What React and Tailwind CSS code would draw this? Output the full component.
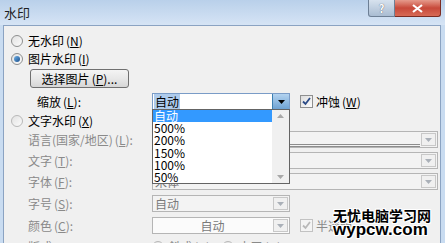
import { useState } from 'react'

const font = { fontFamily: '"Noto Sans CJK SC", "Liberation Sans", sans-serif' }

const Key = ({ k }) => (
  <span className="ml-[2px]">
    (<span className="underline">{k}</span>)
  </span>
)

const Radio = ({ checked, disabled }) => (
  <span
    className={`flex h-[12px] w-[12px] shrink-0 items-center justify-center rounded-full border ${
      disabled ? 'border-[#b8b8b8]' : 'border-[#8e8f8f]'
    } bg-gradient-to-br from-[#e2e2e2] to-[#fbfbfb]`}
  >
    {checked ? (
      <span className="h-[6px] w-[6px] rounded-full bg-gradient-to-br from-[#6fb2e8] to-[#1b4f8c]" />
    ) : null}
  </span>
)

const Check = ({ disabled }) => (
  <span
    className={`flex h-[13px] w-[13px] shrink-0 items-center justify-center border ${
      disabled ? 'border-[#c2c2c2] bg-[#f4f4f4]' : 'border-[#8e8f8f] bg-gradient-to-br from-[#dcdcdc] to-[#fdfdfd]'
    }`}
  >
    <svg width="9" height="9" viewBox="0 0 9 9">
      <path
        d="M1 4.5 L3.5 7 L8 1"
        fill="none"
        stroke={disabled ? '#b9b9b9' : '#2b4b87'}
        strokeWidth="1.8"
      />
    </svg>
  </span>
)

const Arrow = ({ color = '#9a9a9a' }) => (
  <svg width="7" height="4" viewBox="0 0 7 4">
    <path d="M0 0 H7 L3.5 4 Z" fill={color} />
  </svg>
)

const Combo = ({ width, text, center, bg = 'bg-[#f3f3f3]', doubled }) => (
  <div
    className={`flex h-[17px] items-stretch border border-[#b5b5b5] ${bg}`}
    style={{ width }}
  >
    <div
      className={`flex flex-1 items-center px-[2px] text-[#7a7a7a] ${center ? 'justify-center' : ''} ${
        doubled ? 'border-b-[3px] border-double border-[#8d8d8d]' : ''
      }`}
    >
      {text}
    </div>
    <div className="m-px flex w-[15px] items-center justify-center border border-[#c8c8c8] bg-[#f0f0f0]">
      <Arrow color="#aab0b8" />
    </div>
  </div>
)

function App() {
  const [items] = useState(['自动', '500%', '200%', '150%', '100%', '50%'])

  return (
    <div
      className="relative h-[243px] w-[445px] overflow-hidden bg-[#c9dcf1] text-[12px] leading-none text-black"
      style={font}
    >
      {/* title bar */}
      <div className="flex h-[25px] items-start justify-between bg-gradient-to-b from-[#b9d0ea] to-[#d6e4f5]">
        <div className="pl-[4px] pt-[6px] text-[13px] text-[#1e1e1e]">水印</div>
        <div className="flex pr-[4px]">
          <div className="flex h-[17px] w-[27px] items-center justify-center rounded-bl-[3px] border border-t-0 border-[#6d7f95] bg-gradient-to-b from-[#d7e2ee] to-[#a9bcd2] text-[11px] font-bold text-white [text-shadow:0_0_1px_#334]">
            ?
          </div>
          <div className="flex h-[17px] w-[46px] items-center justify-center rounded-br-[3px] border border-l-0 border-t-0 border-[#7a2b22] bg-gradient-to-b from-[#e59a8c] via-[#c7483a] to-[#d76a56]">
            <svg width="11" height="9" viewBox="0 0 11 9">
              <path d="M1 1 L10 8 M10 1 L1 8" stroke="#fff" strokeWidth="2.2" />
            </svg>
          </div>
        </div>
      </div>

      {/* body */}
      <div className="ml-[3px] mr-[4px] h-[218px] border border-b-0 border-[#8ba3c2] bg-[#f0f0f0] pt-[6px]">
        <div className="flex h-[18px] items-center gap-[5px] pl-[7px]">
          <Radio />
          <span>
            无水印<Key k="N" />
          </span>
        </div>
        <div className="flex h-[18px] items-center gap-[5px] pl-[7px]">
          <Radio checked />
          <span>
            图片水印<Key k="I" />
          </span>
        </div>
        <div className="mt-px pl-[26px]">
          <div className="flex h-[19px] w-[99px] items-center justify-center rounded-[3px] border border-[#707070] bg-gradient-to-b from-[#f4f4f4] via-[#e8e8e8] to-[#d6d6d6]">
            选择图片<Key k="P" />...
          </div>
        </div>
        <div className="mt-[5px] flex h-[17px] items-center">
          <div className="w-[148px] shrink-0 pl-[33px]">
            缩放<Key k="L" />:
          </div>
          <div className="flex h-[17px] w-[138px] items-stretch border border-[#7a9cc7] bg-white">
            <div className="flex flex-1 items-center pl-px">
              <span className="bg-[#aecbec] px-px py-[2px]">自动</span>
            </div>
            <div className="flex w-[17px] items-center justify-center border-l border-[#3c7fb1] bg-gradient-to-b from-[#b3d3f0] to-[#6ea2d2]">
              <Arrow color="#000" />
            </div>
          </div>
          <div className="ml-[10px] flex items-center gap-[3px]">
            <Check />
            <span>
              冲蚀<Key k="W" />
            </span>
          </div>
        </div>
        <div className="mt-[2px] flex h-[18px] items-center gap-[5px] pl-[7px]">
          <Radio disabled />
          <span>
            文字水印<Key k="X" />
          </span>
        </div>
        <div className="mt-px flex h-[17px] items-center">
          <div className="w-[148px] shrink-0 pl-[24px] text-[#8a8a8a]">
            语言(国家/地区)<Key k="L" />:
          </div>
          <Combo width={286} text="" doubled />
        </div>
        <div className="mt-[4px] flex h-[17px] items-center">
          <div className="w-[148px] shrink-0 pl-[24px] text-[#8a8a8a]">
            文字<Key k="T" />:
          </div>
          <Combo width={286} text="" />
        </div>
        <div className="mt-[4px] flex h-[17px] items-center">
          <div className="w-[148px] shrink-0 pl-[24px] text-[#8a8a8a]">
            字体<Key k="F" />:
          </div>
          <Combo width={286} text="宋体" />
        </div>
        <div className="mt-[5px] flex h-[17px] items-center">
          <div className="w-[148px] shrink-0 pl-[24px] text-[#8a8a8a]">
            字号<Key k="S" />:
          </div>
          <Combo width={138} text="自动" />
        </div>
        <div className="mt-[5px] flex h-[17px] items-center">
          <div className="w-[148px] shrink-0 pl-[24px] text-[#8a8a8a]">
            颜色<Key k="C" />:
          </div>
          <Combo width={138} text="自动" center bg="bg-[#fbfbfb]" />
          <div className="ml-[10px] flex items-center gap-[3px] text-[#8a8a8a]">
            <Check disabled />
            <span>半透明</span>
          </div>
        </div>
        <div className="mt-[4px] flex h-[17px] items-center">
          <div className="w-[148px] shrink-0 pl-[24px] text-[#8a8a8a]">版式:</div>
          <div className="flex items-center gap-[4px] text-[#8a8a8a]">
            <Radio disabled />
            <span>
              斜式<Key k="D" />
            </span>
          </div>
          <div className="ml-[12px] flex items-center gap-[4px] text-[#8a8a8a]">
            <Radio disabled />
            <span>
              水平<Key k="H" />
            </span>
          </div>
        </div>
      </div>

      {/* open dropdown list */}
      <div className="absolute left-[152px] top-[109px] flex h-[75px] w-[138px] border border-[#646464] bg-white">
        <div className="flex-1">
          {items.map((item, index) => (
            <div
              key={item}
              className={`flex h-[12.2px] items-center pl-px ${
                index === 0 ? 'bg-[#3399ff] text-white' : 'text-black'
              }`}
            >
              {item}
            </div>
          ))}
        </div>
        <div className="flex w-[17px] flex-col items-center justify-between bg-[#f0f0f0] py-[4px]">
          <svg width="7" height="4" viewBox="0 0 7 4">
            <path d="M0 4 H7 L3.5 0 Z" fill="#a8a8a8" />
          </svg>
          <Arrow color="#a8a8a8" />
        </div>
      </div>

      {/* site watermark */}
      <div
        className="absolute left-[333px] top-[208px] flex flex-col font-bold text-black [text-shadow:1px_0_0_#fff,-1px_0_0_#fff,0_1px_0_#fff,0_-1px_0_#fff,1px_1px_0_#fff,-1px_-1px_0_#fff,1px_-1px_0_#fff,-1px_1px_0_#fff]"
      >
        <span className="text-[14px] leading-[14px]">无忧电脑学习网</span>
        <span className="text-[17px] leading-[16px]" style={{ fontFamily: '"Liberation Sans", sans-serif' }}>
          wypcw.com
        </span>
      </div>
    </div>
  )
}

export default App
